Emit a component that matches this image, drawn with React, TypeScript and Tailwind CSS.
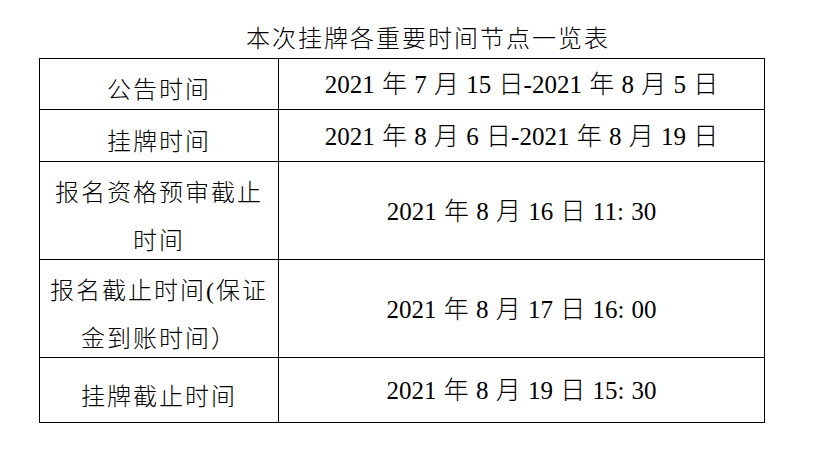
import React from "react";

type Row = {
  label: string[];
  value: string;
  height: string;
  labelPad: string;
};

const rows: Row[] = [
  { label: ["公告时间"], value: "2021 年 7 月 15 日-2021 年 8 月 5 日", height: "h-[50px]", labelPad: "pt-[11px]" },
  { label: ["挂牌时间"], value: "2021 年 8 月 6 日-2021 年 8 月 19 日", height: "h-[52px]", labelPad: "pt-[12px]" },
  { label: ["报名资格预审截止", "时间"], value: "2021 年 8 月 16 日 11: 30", height: "h-[98px]", labelPad: "pt-[12px]" },
  { label: ["报名截止时间(保证", "金到账时间）"], value: "2021 年 8 月 17 日 16: 00", height: "h-[98px]", labelPad: "pt-[12px]" },
  { label: ["挂牌截止时间"], value: "2021 年 8 月 19 日 15: 30", height: "h-[65px]", labelPad: "pt-[13px]" },
];

const TimeRow: React.FC<{ row: Row; first: boolean }> = ({ row, first }) => {
  return (
    <div className={`flex ${row.height} ${first ? "" : "border-t border-black"}`}>
      <div
        className={`w-[239px] shrink-0 border-r border-black flex flex-col items-center justify-center ${row.labelPad} text-[24px] leading-[48px] tracking-[2px] font-light whitespace-nowrap`}
      >
        {row.label.map((line) => (
          <span key={line} className="block h-[48px]">
            {line}
          </span>
        ))}
      </div>
      <div className="flex-1 flex items-center justify-center pt-[2px] text-[25px] font-light [word-spacing:1px] whitespace-nowrap">
        {row.value}
      </div>
    </div>
  );
};

export default function App() {
  return (
    <div
      className="w-[814px] h-[460px] bg-white text-black overflow-hidden"
      style={{ fontFamily: '"Liberation Serif", "Noto Sans CJK SC", serif' }}
    >
      <div className="pt-[27px] pl-[246px] h-[51px] text-[24px] leading-[24px] tracking-[2px] font-light whitespace-nowrap">
        本次挂牌各重要时间节点一览表
      </div>
      <div className="ml-[39px] mt-[7px] w-[726px] border border-black">
        {rows.map((row, i) => (
          <TimeRow key={row.value} row={row} first={i === 0} />
        ))}
      </div>
    </div>
  );
}
